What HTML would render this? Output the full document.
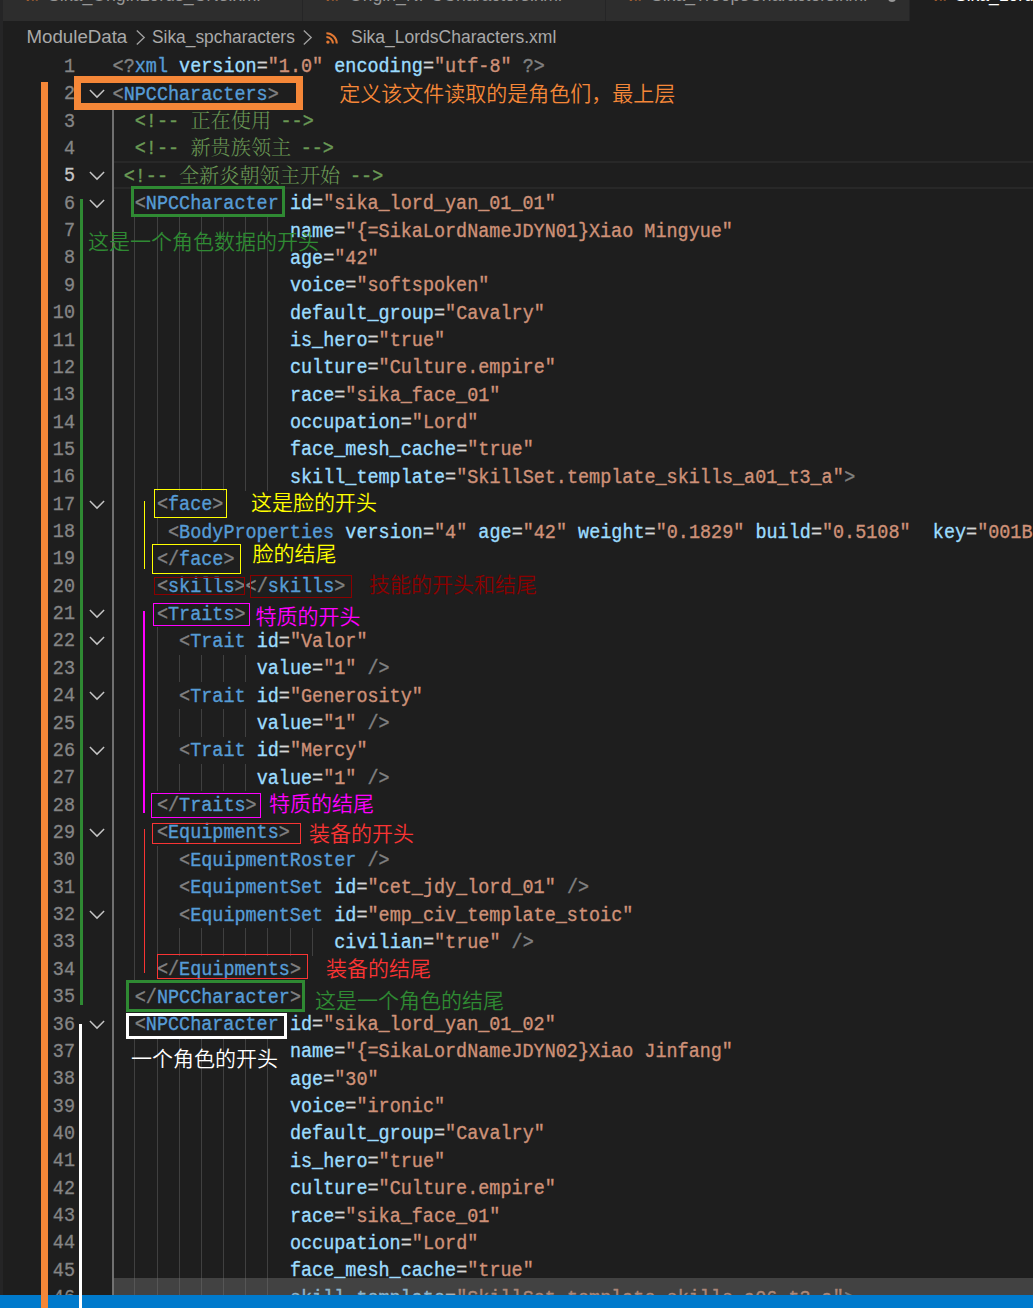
<!DOCTYPE html>
<html lang="zh-CN">
<head>
<meta charset="utf-8">
<title>Sika_LordsCharacters.xml</title>
<style>
html,body{margin:0;padding:0;background:#1e1e1e;}
body{width:1033px;height:1308px;position:relative;overflow:hidden;font-family:"Liberation Sans","Noto Sans CJK SC",sans-serif;}
#side{position:absolute;left:0;top:0;width:3px;height:1308px;background:#252526;}
#tabs{position:absolute;left:3px;top:0;width:1030px;height:21px;background:#252526;overflow:hidden;}
.tab{position:absolute;top:0;height:21px;background:#2d2d2d;overflow:hidden;}
.tab.act{background:#1e1e1e;}
.tab span{position:absolute;top:-15.6px;transform-origin:0 0;font-size:18.7px;line-height:22px;color:#969696;white-space:pre;}
.tab.act span{color:#fff;}
.rss{position:absolute;width:12px;height:12px;}
.chv{position:absolute;width:11px;height:17px;}
.dot{position:absolute;left:282px;top:-6.5px;width:8px;height:8px;border-radius:50%;background:#9a9a9a;}
#bc{position:absolute;left:0;top:21px;width:1033px;height:31.6px;}
#bc span{position:absolute;top:5.4px;transform-origin:0 0;font-size:18.7px;line-height:22px;color:#a9a9a9;white-space:pre;}
#ed{position:absolute;left:0;top:0;width:1033px;height:1308px;}
.ln{position:absolute;left:14.6px;width:60px;transform:scaleX(0.95701);transform-origin:100% 0;text-align:right;height:27.36px;line-height:27.36px;font-family:"Liberation Mono",monospace;font-size:19.30px;color:#858585;-webkit-text-stroke:0.3px;}
.ln.cur{color:#c6c6c6;}
.fold{position:absolute;left:86.5px;width:20px;height:14px;}
.ig{position:absolute;width:1px;height:27.5px;background:#404040;display:block;}
.ig.ac{background:#707070;width:1.4px;}
.cl{position:absolute;left:0;height:27.36px;line-height:27.36px;font-family:"Liberation Mono",monospace;font-size:19.30px;white-space:pre;-webkit-text-stroke:0.35px;transform:scaleX(0.95701);transform-origin:0 0;}
.cl span{position:absolute;top:0;white-space:pre;}
.g{color:#808080}.t{color:#569cd6}.a{color:#9cdcfe}.e{color:#d4d4d4}.s{color:#ce9178}.c{color:#6a9955}
.cl span.z{top:-1px;font-weight:300;color:#6a9955;font-family:"Liberation Serif","Noto Serif CJK SC",serif;font-size:20.16px;transform:scaleX(calc(1/0.95701));transform-origin:0 0;-webkit-text-stroke:0;}
#curline{position:absolute;left:113px;top:161px;width:920px;height:28px;box-sizing:border-box;border-top:2px solid #282828;border-bottom:2px solid #282828;}
#hscroll{position:absolute;left:113px;top:1278px;width:920px;height:17px;background:rgba(121,121,121,.4);}
#status{position:absolute;left:0;top:1294.6px;width:1033px;height:14px;background:#007acc;}
.an{position:absolute;box-sizing:border-box;}
.at{position:absolute;font-family:"Liberation Sans","Noto Sans CJK SC",sans-serif;font-size:21px;line-height:28px;white-space:pre;font-weight:350;}
</style>
</head>
<body>
<div id="side"></div>
<div id="tabs">
  <div class="tab" style="left:0;width:299px"><svg class="rss" style="left:22.5px;top:-11px" viewBox="0 0 12 12"><circle cx="1.9" cy="10.1" r="1.7" fill="#e37933"/><path d="M0.4 5.1 A6.5 6.5 0 0 1 6.9 11.6" fill="none" stroke="#e37933" stroke-width="2"/><path d="M0.4 1.2 A10.4 10.4 0 0 1 10.8 11.6" fill="none" stroke="#e37933" stroke-width="2"/></svg><span style="left:45.2px;transform:scaleX(.947)">Sika_OriginLords_CNs.xml</span></div>
  <div class="tab" style="left:300px;width:302px"><svg class="rss" style="left:23px;top:-11px" viewBox="0 0 12 12"><circle cx="1.9" cy="10.1" r="1.7" fill="#e37933"/><path d="M0.4 5.1 A6.5 6.5 0 0 1 6.9 11.6" fill="none" stroke="#e37933" stroke-width="2"/><path d="M0.4 1.2 A10.4 10.4 0 0 1 10.8 11.6" fill="none" stroke="#e37933" stroke-width="2"/></svg><span style="left:45.6px;transform:scaleX(.945)">Origin_NPCCharacters.xml</span></div>
  <div class="tab" style="left:603px;width:303px"><svg class="rss" style="left:22.5px;top:-11px" viewBox="0 0 12 12"><circle cx="1.9" cy="10.1" r="1.7" fill="#e37933"/><path d="M0.4 5.1 A6.5 6.5 0 0 1 6.9 11.6" fill="none" stroke="#e37933" stroke-width="2"/><path d="M0.4 1.2 A10.4 10.4 0 0 1 10.8 11.6" fill="none" stroke="#e37933" stroke-width="2"/></svg><span style="left:44.6px;transform:scaleX(.94)">Sika_TroopsCharacters.xml</span><b class="dot"></b></div>
  <div class="tab act" style="left:907px;width:130px"><svg class="rss" style="left:23.5px;top:-11px" viewBox="0 0 12 12"><circle cx="1.9" cy="10.1" r="1.7" fill="#e37933"/><path d="M0.4 5.1 A6.5 6.5 0 0 1 6.9 11.6" fill="none" stroke="#e37933" stroke-width="2"/><path d="M0.4 1.2 A10.4 10.4 0 0 1 10.8 11.6" fill="none" stroke="#e37933" stroke-width="2"/></svg><span style="left:45px;transform:scaleX(.937)">Sika_LordsCharacters.xml</span></div>
</div>
<div id="bc">
  <span style="left:26.5px">ModuleData</span>
  <svg class="chv" style="left:135px;top:7.6px" viewBox="0 0 11 17"><path d="M1.8 1.4 L9.2 8.5 L1.8 15.6" fill="none" stroke="#a0a0a0" stroke-width="1.35"/></svg>
  <span style="left:152px;transform:scaleX(.929)">Sika_spcharacters</span>
  <svg class="chv" style="left:302px;top:7.6px" viewBox="0 0 11 17"><path d="M1.8 1.4 L9.2 8.5 L1.8 15.6" fill="none" stroke="#a0a0a0" stroke-width="1.35"/></svg>
  <svg class="rss" style="left:326.3px;top:10.6px" viewBox="0 0 12 12"><circle cx="1.9" cy="10.1" r="1.7" fill="#e37933"/><path d="M0.4 5.1 A6.5 6.5 0 0 1 6.9 11.6" fill="none" stroke="#e37933" stroke-width="2"/><path d="M0.4 1.2 A10.4 10.4 0 0 1 10.8 11.6" fill="none" stroke="#e37933" stroke-width="2"/></svg>
  <span style="left:350.5px;transform:scaleX(.937)">Sika_LordsCharacters.xml</span>
</div>
<div id="ed">
<div id="curline"></div>
<div class="ln" style="top:53.90px">1</div>
<div class="cl" style="top:54.40px"><span class="g" style="left:117.66px">&lt;?</span><span class="t" style="left:140.82px">xml</span><span class="a" style="left:175.57px"> version</span><span class="e" style="left:268.22px">=</span><span class="s" style="left:279.80px">"1.0"</span><span class="a" style="left:337.71px"> encoding</span><span class="e" style="left:441.95px">=</span><span class="s" style="left:453.53px">"utf-8"</span><span class="g" style="left:534.61px"> ?&gt;</span></div>
<div class="ln" style="top:81.26px">2</div>
<svg class="fold" style="top:87.26px" viewBox="0 0 20 14"><path d="M2.9 3 L10 10.1 L17.1 3" fill="none" stroke="#c5c5c5" stroke-width="1.45"/></svg>
<div class="cl" style="top:81.76px"><span class="g" style="left:117.66px">&lt;</span><span class="t" style="left:129.24px">NPCCharacters</span><span class="g" style="left:279.80px">&gt;</span></div>
<div class="ln" style="top:108.62px">3</div>
<i class="ig ac" style="left:112.30px;top:107.32px"></i>
<div class="cl" style="top:109.12px"><span class="c" style="left:140.82px">&lt;!-- </span><span class="z" style="left:198.63px">正在使用</span><span class="c" style="left:281.53px"> --&gt;</span></div>
<div class="ln" style="top:135.98px">4</div>
<i class="ig ac" style="left:112.30px;top:134.68px"></i>
<div class="cl" style="top:136.48px"><span class="c" style="left:140.82px">&lt;!-- </span><span class="z" style="left:198.63px">新贵族领主</span><span class="c" style="left:302.60px"> --&gt;</span></div>
<div class="ln cur" style="top:163.34px">5</div>
<svg class="fold" style="top:169.34px" viewBox="0 0 20 14"><path d="M2.9 3 L10 10.1 L17.1 3" fill="none" stroke="#c5c5c5" stroke-width="1.45"/></svg>
<i class="ig ac" style="left:112.30px;top:162.04px"></i>
<div class="cl" style="top:163.84px"><span class="c" style="left:129.24px">&lt;!-- </span><span class="z" style="left:187.04px">全新炎朝领主开始</span><span class="c" style="left:354.21px"> --&gt;</span></div>
<div class="ln" style="top:190.70px">6</div>
<svg class="fold" style="top:196.70px" viewBox="0 0 20 14"><path d="M2.9 3 L10 10.1 L17.1 3" fill="none" stroke="#c5c5c5" stroke-width="1.45"/></svg>
<i class="ig ac" style="left:112.30px;top:189.40px"></i>
<div class="cl" style="top:191.20px"><span class="g" style="left:140.82px">&lt;</span><span class="t" style="left:152.40px">NPCCharacter</span><span class="a" style="left:291.39px">&nbsp;</span><span class="a" style="left:302.97px">id</span><span class="e" style="left:326.13px">=</span><span class="s" style="left:337.71px">"sika_lord_yan_01_01"</span></div>
<div class="ln" style="top:218.06px">7</div>
<i class="ig ac" style="left:112.30px;top:216.76px"></i>
<i class="ig" style="left:134.47px;top:216.76px"></i>
<i class="ig" style="left:156.64px;top:216.76px"></i>
<i class="ig" style="left:178.80px;top:216.76px"></i>
<i class="ig" style="left:200.97px;top:216.76px"></i>
<i class="ig" style="left:223.14px;top:216.76px"></i>
<i class="ig" style="left:245.31px;top:216.76px"></i>
<i class="ig" style="left:267.48px;top:216.76px"></i>
<div class="cl" style="top:218.56px"><span class="a" style="left:302.97px">name</span><span class="e" style="left:349.30px">=</span><span class="s" style="left:360.88px">"{=SikaLordNameJDYN01}Xiao Mingyue"</span></div>
<div class="ln" style="top:245.42px">8</div>
<i class="ig ac" style="left:112.30px;top:244.12px"></i>
<i class="ig" style="left:134.47px;top:244.12px"></i>
<i class="ig" style="left:156.64px;top:244.12px"></i>
<i class="ig" style="left:178.80px;top:244.12px"></i>
<i class="ig" style="left:200.97px;top:244.12px"></i>
<i class="ig" style="left:223.14px;top:244.12px"></i>
<i class="ig" style="left:245.31px;top:244.12px"></i>
<i class="ig" style="left:267.48px;top:244.12px"></i>
<div class="cl" style="top:245.92px"><span class="a" style="left:302.97px">age</span><span class="e" style="left:337.71px">=</span><span class="s" style="left:349.30px">"42"</span></div>
<div class="ln" style="top:272.78px">9</div>
<i class="ig ac" style="left:112.30px;top:271.48px"></i>
<i class="ig" style="left:134.47px;top:271.48px"></i>
<i class="ig" style="left:156.64px;top:271.48px"></i>
<i class="ig" style="left:178.80px;top:271.48px"></i>
<i class="ig" style="left:200.97px;top:271.48px"></i>
<i class="ig" style="left:223.14px;top:271.48px"></i>
<i class="ig" style="left:245.31px;top:271.48px"></i>
<i class="ig" style="left:267.48px;top:271.48px"></i>
<div class="cl" style="top:273.28px"><span class="a" style="left:302.97px">voice</span><span class="e" style="left:360.88px">=</span><span class="s" style="left:372.46px">"softspoken"</span></div>
<div class="ln" style="top:300.14px">10</div>
<i class="ig ac" style="left:112.30px;top:298.84px"></i>
<i class="ig" style="left:134.47px;top:298.84px"></i>
<i class="ig" style="left:156.64px;top:298.84px"></i>
<i class="ig" style="left:178.80px;top:298.84px"></i>
<i class="ig" style="left:200.97px;top:298.84px"></i>
<i class="ig" style="left:223.14px;top:298.84px"></i>
<i class="ig" style="left:245.31px;top:298.84px"></i>
<i class="ig" style="left:267.48px;top:298.84px"></i>
<div class="cl" style="top:300.64px"><span class="a" style="left:302.97px">default_group</span><span class="e" style="left:453.53px">=</span><span class="s" style="left:465.11px">"Cavalry"</span></div>
<div class="ln" style="top:327.50px">11</div>
<i class="ig ac" style="left:112.30px;top:326.20px"></i>
<i class="ig" style="left:134.47px;top:326.20px"></i>
<i class="ig" style="left:156.64px;top:326.20px"></i>
<i class="ig" style="left:178.80px;top:326.20px"></i>
<i class="ig" style="left:200.97px;top:326.20px"></i>
<i class="ig" style="left:223.14px;top:326.20px"></i>
<i class="ig" style="left:245.31px;top:326.20px"></i>
<i class="ig" style="left:267.48px;top:326.20px"></i>
<div class="cl" style="top:328.00px"><span class="a" style="left:302.97px">is_hero</span><span class="e" style="left:384.04px">=</span><span class="s" style="left:395.62px">"true"</span></div>
<div class="ln" style="top:354.86px">12</div>
<i class="ig ac" style="left:112.30px;top:353.56px"></i>
<i class="ig" style="left:134.47px;top:353.56px"></i>
<i class="ig" style="left:156.64px;top:353.56px"></i>
<i class="ig" style="left:178.80px;top:353.56px"></i>
<i class="ig" style="left:200.97px;top:353.56px"></i>
<i class="ig" style="left:223.14px;top:353.56px"></i>
<i class="ig" style="left:245.31px;top:353.56px"></i>
<i class="ig" style="left:267.48px;top:353.56px"></i>
<div class="cl" style="top:355.36px"><span class="a" style="left:302.97px">culture</span><span class="e" style="left:384.04px">=</span><span class="s" style="left:395.62px">"Culture.empire"</span></div>
<div class="ln" style="top:382.22px">13</div>
<i class="ig ac" style="left:112.30px;top:380.92px"></i>
<i class="ig" style="left:134.47px;top:380.92px"></i>
<i class="ig" style="left:156.64px;top:380.92px"></i>
<i class="ig" style="left:178.80px;top:380.92px"></i>
<i class="ig" style="left:200.97px;top:380.92px"></i>
<i class="ig" style="left:223.14px;top:380.92px"></i>
<i class="ig" style="left:245.31px;top:380.92px"></i>
<i class="ig" style="left:267.48px;top:380.92px"></i>
<div class="cl" style="top:382.72px"><span class="a" style="left:302.97px">race</span><span class="e" style="left:349.30px">=</span><span class="s" style="left:360.88px">"sika_face_01"</span></div>
<div class="ln" style="top:409.58px">14</div>
<i class="ig ac" style="left:112.30px;top:408.28px"></i>
<i class="ig" style="left:134.47px;top:408.28px"></i>
<i class="ig" style="left:156.64px;top:408.28px"></i>
<i class="ig" style="left:178.80px;top:408.28px"></i>
<i class="ig" style="left:200.97px;top:408.28px"></i>
<i class="ig" style="left:223.14px;top:408.28px"></i>
<i class="ig" style="left:245.31px;top:408.28px"></i>
<i class="ig" style="left:267.48px;top:408.28px"></i>
<div class="cl" style="top:410.08px"><span class="a" style="left:302.97px">occupation</span><span class="e" style="left:418.79px">=</span><span class="s" style="left:430.37px">"Lord"</span></div>
<div class="ln" style="top:436.94px">15</div>
<i class="ig ac" style="left:112.30px;top:435.64px"></i>
<i class="ig" style="left:134.47px;top:435.64px"></i>
<i class="ig" style="left:156.64px;top:435.64px"></i>
<i class="ig" style="left:178.80px;top:435.64px"></i>
<i class="ig" style="left:200.97px;top:435.64px"></i>
<i class="ig" style="left:223.14px;top:435.64px"></i>
<i class="ig" style="left:245.31px;top:435.64px"></i>
<i class="ig" style="left:267.48px;top:435.64px"></i>
<div class="cl" style="top:437.44px"><span class="a" style="left:302.97px">face_mesh_cache</span><span class="e" style="left:476.70px">=</span><span class="s" style="left:488.28px">"true"</span></div>
<div class="ln" style="top:464.30px">16</div>
<i class="ig ac" style="left:112.30px;top:463.00px"></i>
<i class="ig" style="left:134.47px;top:463.00px"></i>
<i class="ig" style="left:156.64px;top:463.00px"></i>
<i class="ig" style="left:178.80px;top:463.00px"></i>
<i class="ig" style="left:200.97px;top:463.00px"></i>
<i class="ig" style="left:223.14px;top:463.00px"></i>
<i class="ig" style="left:245.31px;top:463.00px"></i>
<i class="ig" style="left:267.48px;top:463.00px"></i>
<div class="cl" style="top:464.80px"><span class="a" style="left:302.97px">skill_template</span><span class="e" style="left:465.11px">=</span><span class="s" style="left:476.70px">"SkillSet.template_skills_a01_t3_a"</span><span class="g" style="left:882.06px">&gt;</span></div>
<div class="ln" style="top:491.66px">17</div>
<svg class="fold" style="top:497.66px" viewBox="0 0 20 14"><path d="M2.9 3 L10 10.1 L17.1 3" fill="none" stroke="#c5c5c5" stroke-width="1.45"/></svg>
<i class="ig ac" style="left:112.30px;top:490.36px"></i>
<i class="ig" style="left:134.47px;top:490.36px"></i>
<div class="cl" style="top:492.16px"><span class="g" style="left:163.99px">&lt;</span><span class="t" style="left:175.57px">face</span><span class="g" style="left:221.89px">&gt;</span></div>
<div class="ln" style="top:519.02px">18</div>
<i class="ig ac" style="left:112.30px;top:517.72px"></i>
<i class="ig" style="left:134.47px;top:517.72px"></i>
<i class="ig" style="left:156.64px;top:517.72px"></i>
<div class="cl" style="top:519.52px"><span class="g" style="left:175.57px">&lt;</span><span class="t" style="left:187.15px">BodyProperties</span><span class="a" style="left:349.30px">&nbsp;</span><span class="a" style="left:360.88px">version</span><span class="e" style="left:441.95px">=</span><span class="s" style="left:453.53px">"4"</span><span class="a" style="left:488.28px">&nbsp;</span><span class="a" style="left:499.86px">age</span><span class="e" style="left:534.61px">=</span><span class="s" style="left:546.19px">"42"</span><span class="a" style="left:592.52px">&nbsp;</span><span class="a" style="left:604.10px">weight</span><span class="e" style="left:673.59px">=</span><span class="s" style="left:685.17px">"0.1829"</span><span class="a" style="left:777.83px">&nbsp;</span><span class="a" style="left:789.41px">build</span><span class="e" style="left:847.32px">=</span><span class="s" style="left:858.90px">"0.5108"</span><span class="a" style="left:951.55px">&nbsp;&nbsp;</span><span class="a" style="left:974.72px">key</span><span class="e" style="left:1009.46px">=</span><span class="s" style="left:1021.04px">"001B</span></div>
<div class="ln" style="top:546.38px">19</div>
<i class="ig ac" style="left:112.30px;top:545.08px"></i>
<i class="ig" style="left:134.47px;top:545.08px"></i>
<div class="cl" style="top:546.88px"><span class="g" style="left:163.99px">&lt;/</span><span class="t" style="left:187.15px">face</span><span class="g" style="left:233.48px">&gt;</span></div>
<div class="ln" style="top:573.74px">20</div>
<i class="ig ac" style="left:112.30px;top:572.44px"></i>
<i class="ig" style="left:134.47px;top:572.44px"></i>
<div class="cl" style="top:574.24px"><span class="g" style="left:163.99px">&lt;</span><span class="t" style="left:175.57px">skills</span><span class="g" style="left:245.06px">&gt;&lt;/</span><span class="t" style="left:279.80px">skills</span><span class="g" style="left:349.30px">&gt;</span></div>
<div class="ln" style="top:601.10px">21</div>
<svg class="fold" style="top:607.10px" viewBox="0 0 20 14"><path d="M2.9 3 L10 10.1 L17.1 3" fill="none" stroke="#c5c5c5" stroke-width="1.45"/></svg>
<i class="ig ac" style="left:112.30px;top:599.80px"></i>
<i class="ig" style="left:134.47px;top:599.80px"></i>
<div class="cl" style="top:601.60px"><span class="g" style="left:163.99px">&lt;</span><span class="t" style="left:175.57px">Traits</span><span class="g" style="left:245.06px">&gt;</span></div>
<div class="ln" style="top:628.46px">22</div>
<svg class="fold" style="top:634.46px" viewBox="0 0 20 14"><path d="M2.9 3 L10 10.1 L17.1 3" fill="none" stroke="#c5c5c5" stroke-width="1.45"/></svg>
<i class="ig ac" style="left:112.30px;top:627.16px"></i>
<i class="ig" style="left:134.47px;top:627.16px"></i>
<i class="ig" style="left:156.64px;top:627.16px"></i>
<div class="cl" style="top:628.96px"><span class="g" style="left:187.15px">&lt;</span><span class="t" style="left:198.73px">Trait</span><span class="a" style="left:256.64px">&nbsp;</span><span class="a" style="left:268.22px">id</span><span class="e" style="left:291.39px">=</span><span class="s" style="left:302.97px">"Valor"</span></div>
<div class="ln" style="top:655.82px">23</div>
<i class="ig ac" style="left:112.30px;top:654.52px"></i>
<i class="ig" style="left:134.47px;top:654.52px"></i>
<i class="ig" style="left:156.64px;top:654.52px"></i>
<i class="ig" style="left:178.80px;top:654.52px"></i>
<i class="ig" style="left:200.97px;top:654.52px"></i>
<i class="ig" style="left:223.14px;top:654.52px"></i>
<i class="ig" style="left:245.31px;top:654.52px"></i>
<div class="cl" style="top:656.32px"><span class="a" style="left:268.22px">value</span><span class="e" style="left:326.13px">=</span><span class="s" style="left:337.71px">"1"</span><span class="g" style="left:372.46px"> /&gt;</span></div>
<div class="ln" style="top:683.18px">24</div>
<svg class="fold" style="top:689.18px" viewBox="0 0 20 14"><path d="M2.9 3 L10 10.1 L17.1 3" fill="none" stroke="#c5c5c5" stroke-width="1.45"/></svg>
<i class="ig ac" style="left:112.30px;top:681.88px"></i>
<i class="ig" style="left:134.47px;top:681.88px"></i>
<i class="ig" style="left:156.64px;top:681.88px"></i>
<div class="cl" style="top:683.68px"><span class="g" style="left:187.15px">&lt;</span><span class="t" style="left:198.73px">Trait</span><span class="a" style="left:256.64px">&nbsp;</span><span class="a" style="left:268.22px">id</span><span class="e" style="left:291.39px">=</span><span class="s" style="left:302.97px">"Generosity"</span></div>
<div class="ln" style="top:710.54px">25</div>
<i class="ig ac" style="left:112.30px;top:709.24px"></i>
<i class="ig" style="left:134.47px;top:709.24px"></i>
<i class="ig" style="left:156.64px;top:709.24px"></i>
<i class="ig" style="left:178.80px;top:709.24px"></i>
<i class="ig" style="left:200.97px;top:709.24px"></i>
<i class="ig" style="left:223.14px;top:709.24px"></i>
<i class="ig" style="left:245.31px;top:709.24px"></i>
<div class="cl" style="top:711.04px"><span class="a" style="left:268.22px">value</span><span class="e" style="left:326.13px">=</span><span class="s" style="left:337.71px">"1"</span><span class="g" style="left:372.46px"> /&gt;</span></div>
<div class="ln" style="top:737.90px">26</div>
<svg class="fold" style="top:743.90px" viewBox="0 0 20 14"><path d="M2.9 3 L10 10.1 L17.1 3" fill="none" stroke="#c5c5c5" stroke-width="1.45"/></svg>
<i class="ig ac" style="left:112.30px;top:736.60px"></i>
<i class="ig" style="left:134.47px;top:736.60px"></i>
<i class="ig" style="left:156.64px;top:736.60px"></i>
<div class="cl" style="top:738.40px"><span class="g" style="left:187.15px">&lt;</span><span class="t" style="left:198.73px">Trait</span><span class="a" style="left:256.64px">&nbsp;</span><span class="a" style="left:268.22px">id</span><span class="e" style="left:291.39px">=</span><span class="s" style="left:302.97px">"Mercy"</span></div>
<div class="ln" style="top:765.26px">27</div>
<i class="ig ac" style="left:112.30px;top:763.96px"></i>
<i class="ig" style="left:134.47px;top:763.96px"></i>
<i class="ig" style="left:156.64px;top:763.96px"></i>
<i class="ig" style="left:178.80px;top:763.96px"></i>
<i class="ig" style="left:200.97px;top:763.96px"></i>
<i class="ig" style="left:223.14px;top:763.96px"></i>
<i class="ig" style="left:245.31px;top:763.96px"></i>
<div class="cl" style="top:765.76px"><span class="a" style="left:268.22px">value</span><span class="e" style="left:326.13px">=</span><span class="s" style="left:337.71px">"1"</span><span class="g" style="left:372.46px"> /&gt;</span></div>
<div class="ln" style="top:792.62px">28</div>
<i class="ig ac" style="left:112.30px;top:791.32px"></i>
<i class="ig" style="left:134.47px;top:791.32px"></i>
<div class="cl" style="top:793.12px"><span class="g" style="left:163.99px">&lt;/</span><span class="t" style="left:187.15px">Traits</span><span class="g" style="left:256.64px">&gt;</span></div>
<div class="ln" style="top:819.98px">29</div>
<svg class="fold" style="top:825.98px" viewBox="0 0 20 14"><path d="M2.9 3 L10 10.1 L17.1 3" fill="none" stroke="#c5c5c5" stroke-width="1.45"/></svg>
<i class="ig ac" style="left:112.30px;top:818.68px"></i>
<i class="ig" style="left:134.47px;top:818.68px"></i>
<div class="cl" style="top:820.48px"><span class="g" style="left:163.99px">&lt;</span><span class="t" style="left:175.57px">Equipments</span><span class="g" style="left:291.39px">&gt;</span></div>
<div class="ln" style="top:847.34px">30</div>
<i class="ig ac" style="left:112.30px;top:846.04px"></i>
<i class="ig" style="left:134.47px;top:846.04px"></i>
<i class="ig" style="left:156.64px;top:846.04px"></i>
<div class="cl" style="top:847.84px"><span class="g" style="left:187.15px">&lt;</span><span class="t" style="left:198.73px">EquipmentRoster</span><span class="g" style="left:372.46px"> /&gt;</span></div>
<div class="ln" style="top:874.70px">31</div>
<i class="ig ac" style="left:112.30px;top:873.40px"></i>
<i class="ig" style="left:134.47px;top:873.40px"></i>
<i class="ig" style="left:156.64px;top:873.40px"></i>
<div class="cl" style="top:875.20px"><span class="g" style="left:187.15px">&lt;</span><span class="t" style="left:198.73px">EquipmentSet</span><span class="a" style="left:337.71px">&nbsp;</span><span class="a" style="left:349.30px">id</span><span class="e" style="left:372.46px">=</span><span class="s" style="left:384.04px">"cet_jdy_lord_01"</span><span class="g" style="left:580.93px"> /&gt;</span></div>
<div class="ln" style="top:902.06px">32</div>
<svg class="fold" style="top:908.06px" viewBox="0 0 20 14"><path d="M2.9 3 L10 10.1 L17.1 3" fill="none" stroke="#c5c5c5" stroke-width="1.45"/></svg>
<i class="ig ac" style="left:112.30px;top:900.76px"></i>
<i class="ig" style="left:134.47px;top:900.76px"></i>
<i class="ig" style="left:156.64px;top:900.76px"></i>
<div class="cl" style="top:902.56px"><span class="g" style="left:187.15px">&lt;</span><span class="t" style="left:198.73px">EquipmentSet</span><span class="a" style="left:337.71px">&nbsp;</span><span class="a" style="left:349.30px">id</span><span class="e" style="left:372.46px">=</span><span class="s" style="left:384.04px">"emp_civ_template_stoic"</span></div>
<div class="ln" style="top:929.42px">33</div>
<i class="ig ac" style="left:112.30px;top:928.12px"></i>
<i class="ig" style="left:134.47px;top:928.12px"></i>
<i class="ig" style="left:156.64px;top:928.12px"></i>
<i class="ig" style="left:178.80px;top:928.12px"></i>
<i class="ig" style="left:200.97px;top:928.12px"></i>
<i class="ig" style="left:223.14px;top:928.12px"></i>
<i class="ig" style="left:245.31px;top:928.12px"></i>
<i class="ig" style="left:267.48px;top:928.12px"></i>
<i class="ig" style="left:289.64px;top:928.12px"></i>
<i class="ig" style="left:311.81px;top:928.12px"></i>
<div class="cl" style="top:929.92px"><span class="a" style="left:349.30px">civilian</span><span class="e" style="left:441.95px">=</span><span class="s" style="left:453.53px">"true"</span><span class="g" style="left:523.02px"> /&gt;</span></div>
<div class="ln" style="top:956.78px">34</div>
<i class="ig ac" style="left:112.30px;top:955.48px"></i>
<i class="ig" style="left:134.47px;top:955.48px"></i>
<div class="cl" style="top:957.28px"><span class="g" style="left:163.99px">&lt;/</span><span class="t" style="left:187.15px">Equipments</span><span class="g" style="left:302.97px">&gt;</span></div>
<div class="ln" style="top:984.14px">35</div>
<i class="ig ac" style="left:112.30px;top:982.84px"></i>
<div class="cl" style="top:984.64px"><span class="g" style="left:140.82px">&lt;/</span><span class="t" style="left:163.99px">NPCCharacter</span><span class="g" style="left:302.97px">&gt;</span></div>
<div class="ln" style="top:1011.50px">36</div>
<svg class="fold" style="top:1017.50px" viewBox="0 0 20 14"><path d="M2.9 3 L10 10.1 L17.1 3" fill="none" stroke="#c5c5c5" stroke-width="1.45"/></svg>
<i class="ig ac" style="left:112.30px;top:1010.20px"></i>
<div class="cl" style="top:1012.00px"><span class="g" style="left:140.82px">&lt;</span><span class="t" style="left:152.40px">NPCCharacter</span><span class="a" style="left:291.39px">&nbsp;</span><span class="a" style="left:302.97px">id</span><span class="e" style="left:326.13px">=</span><span class="s" style="left:337.71px">"sika_lord_yan_01_02"</span></div>
<div class="ln" style="top:1038.86px">37</div>
<i class="ig ac" style="left:112.30px;top:1037.56px"></i>
<i class="ig" style="left:134.47px;top:1037.56px"></i>
<i class="ig" style="left:156.64px;top:1037.56px"></i>
<i class="ig" style="left:178.80px;top:1037.56px"></i>
<i class="ig" style="left:200.97px;top:1037.56px"></i>
<i class="ig" style="left:223.14px;top:1037.56px"></i>
<i class="ig" style="left:245.31px;top:1037.56px"></i>
<i class="ig" style="left:267.48px;top:1037.56px"></i>
<div class="cl" style="top:1039.36px"><span class="a" style="left:302.97px">name</span><span class="e" style="left:349.30px">=</span><span class="s" style="left:360.88px">"{=SikaLordNameJDYN02}Xiao Jinfang"</span></div>
<div class="ln" style="top:1066.22px">38</div>
<i class="ig ac" style="left:112.30px;top:1064.92px"></i>
<i class="ig" style="left:134.47px;top:1064.92px"></i>
<i class="ig" style="left:156.64px;top:1064.92px"></i>
<i class="ig" style="left:178.80px;top:1064.92px"></i>
<i class="ig" style="left:200.97px;top:1064.92px"></i>
<i class="ig" style="left:223.14px;top:1064.92px"></i>
<i class="ig" style="left:245.31px;top:1064.92px"></i>
<i class="ig" style="left:267.48px;top:1064.92px"></i>
<div class="cl" style="top:1066.72px"><span class="a" style="left:302.97px">age</span><span class="e" style="left:337.71px">=</span><span class="s" style="left:349.30px">"30"</span></div>
<div class="ln" style="top:1093.58px">39</div>
<i class="ig ac" style="left:112.30px;top:1092.28px"></i>
<i class="ig" style="left:134.47px;top:1092.28px"></i>
<i class="ig" style="left:156.64px;top:1092.28px"></i>
<i class="ig" style="left:178.80px;top:1092.28px"></i>
<i class="ig" style="left:200.97px;top:1092.28px"></i>
<i class="ig" style="left:223.14px;top:1092.28px"></i>
<i class="ig" style="left:245.31px;top:1092.28px"></i>
<i class="ig" style="left:267.48px;top:1092.28px"></i>
<div class="cl" style="top:1094.08px"><span class="a" style="left:302.97px">voice</span><span class="e" style="left:360.88px">=</span><span class="s" style="left:372.46px">"ironic"</span></div>
<div class="ln" style="top:1120.94px">40</div>
<i class="ig ac" style="left:112.30px;top:1119.64px"></i>
<i class="ig" style="left:134.47px;top:1119.64px"></i>
<i class="ig" style="left:156.64px;top:1119.64px"></i>
<i class="ig" style="left:178.80px;top:1119.64px"></i>
<i class="ig" style="left:200.97px;top:1119.64px"></i>
<i class="ig" style="left:223.14px;top:1119.64px"></i>
<i class="ig" style="left:245.31px;top:1119.64px"></i>
<i class="ig" style="left:267.48px;top:1119.64px"></i>
<div class="cl" style="top:1121.44px"><span class="a" style="left:302.97px">default_group</span><span class="e" style="left:453.53px">=</span><span class="s" style="left:465.11px">"Cavalry"</span></div>
<div class="ln" style="top:1148.30px">41</div>
<i class="ig ac" style="left:112.30px;top:1147.00px"></i>
<i class="ig" style="left:134.47px;top:1147.00px"></i>
<i class="ig" style="left:156.64px;top:1147.00px"></i>
<i class="ig" style="left:178.80px;top:1147.00px"></i>
<i class="ig" style="left:200.97px;top:1147.00px"></i>
<i class="ig" style="left:223.14px;top:1147.00px"></i>
<i class="ig" style="left:245.31px;top:1147.00px"></i>
<i class="ig" style="left:267.48px;top:1147.00px"></i>
<div class="cl" style="top:1148.80px"><span class="a" style="left:302.97px">is_hero</span><span class="e" style="left:384.04px">=</span><span class="s" style="left:395.62px">"true"</span></div>
<div class="ln" style="top:1175.66px">42</div>
<i class="ig ac" style="left:112.30px;top:1174.36px"></i>
<i class="ig" style="left:134.47px;top:1174.36px"></i>
<i class="ig" style="left:156.64px;top:1174.36px"></i>
<i class="ig" style="left:178.80px;top:1174.36px"></i>
<i class="ig" style="left:200.97px;top:1174.36px"></i>
<i class="ig" style="left:223.14px;top:1174.36px"></i>
<i class="ig" style="left:245.31px;top:1174.36px"></i>
<i class="ig" style="left:267.48px;top:1174.36px"></i>
<div class="cl" style="top:1176.16px"><span class="a" style="left:302.97px">culture</span><span class="e" style="left:384.04px">=</span><span class="s" style="left:395.62px">"Culture.empire"</span></div>
<div class="ln" style="top:1203.02px">43</div>
<i class="ig ac" style="left:112.30px;top:1201.72px"></i>
<i class="ig" style="left:134.47px;top:1201.72px"></i>
<i class="ig" style="left:156.64px;top:1201.72px"></i>
<i class="ig" style="left:178.80px;top:1201.72px"></i>
<i class="ig" style="left:200.97px;top:1201.72px"></i>
<i class="ig" style="left:223.14px;top:1201.72px"></i>
<i class="ig" style="left:245.31px;top:1201.72px"></i>
<i class="ig" style="left:267.48px;top:1201.72px"></i>
<div class="cl" style="top:1203.52px"><span class="a" style="left:302.97px">race</span><span class="e" style="left:349.30px">=</span><span class="s" style="left:360.88px">"sika_face_01"</span></div>
<div class="ln" style="top:1230.38px">44</div>
<i class="ig ac" style="left:112.30px;top:1229.08px"></i>
<i class="ig" style="left:134.47px;top:1229.08px"></i>
<i class="ig" style="left:156.64px;top:1229.08px"></i>
<i class="ig" style="left:178.80px;top:1229.08px"></i>
<i class="ig" style="left:200.97px;top:1229.08px"></i>
<i class="ig" style="left:223.14px;top:1229.08px"></i>
<i class="ig" style="left:245.31px;top:1229.08px"></i>
<i class="ig" style="left:267.48px;top:1229.08px"></i>
<div class="cl" style="top:1230.88px"><span class="a" style="left:302.97px">occupation</span><span class="e" style="left:418.79px">=</span><span class="s" style="left:430.37px">"Lord"</span></div>
<div class="ln" style="top:1257.74px">45</div>
<i class="ig ac" style="left:112.30px;top:1256.44px"></i>
<i class="ig" style="left:134.47px;top:1256.44px"></i>
<i class="ig" style="left:156.64px;top:1256.44px"></i>
<i class="ig" style="left:178.80px;top:1256.44px"></i>
<i class="ig" style="left:200.97px;top:1256.44px"></i>
<i class="ig" style="left:223.14px;top:1256.44px"></i>
<i class="ig" style="left:245.31px;top:1256.44px"></i>
<i class="ig" style="left:267.48px;top:1256.44px"></i>
<div class="cl" style="top:1258.24px"><span class="a" style="left:302.97px">face_mesh_cache</span><span class="e" style="left:476.70px">=</span><span class="s" style="left:488.28px">"true"</span></div>
<div class="ln" style="top:1285.10px">46</div>
<i class="ig ac" style="left:112.30px;top:1283.80px"></i>
<i class="ig" style="left:134.47px;top:1283.80px"></i>
<i class="ig" style="left:156.64px;top:1283.80px"></i>
<i class="ig" style="left:178.80px;top:1283.80px"></i>
<i class="ig" style="left:200.97px;top:1283.80px"></i>
<i class="ig" style="left:223.14px;top:1283.80px"></i>
<i class="ig" style="left:245.31px;top:1283.80px"></i>
<i class="ig" style="left:267.48px;top:1283.80px"></i>
<div class="cl" style="top:1285.60px"><span class="a" style="left:302.97px">skill_template</span><span class="e" style="left:465.11px">=</span><span class="s" style="left:476.70px">"SkillSet.template_skills_a06_t3_a"</span><span class="g" style="left:882.06px">&gt;</span></div>
<div id="hscroll"></div>
</div>
<div id="status"></div>
<div id="annos">
<!-- orange: top level -->
<div class="an" style="left:41px;top:82px;width:7px;height:1226px;background:#f58738"></div>
<div class="an" style="left:74px;top:76px;width:229px;height:34px;border:7px solid #f58738"></div>
<div class="at" style="left:339.3px;top:80px;color:#f58738">定义该文件读取的是角色们，最上层</div>
<!-- green: first character -->
<div class="an" style="left:80px;top:199px;width:3px;height:805.7px;background:#2f8a33"></div>
<div class="an" style="left:131px;top:186px;width:154px;height:31px;border:3px solid #2f8a33"></div>
<div class="at" style="left:88px;top:228px;color:#2f8a33">这是一个角色数据的开头</div>
<div class="an" style="left:126px;top:979.6px;width:179.3px;height:32.6px;border:3px solid #2f8a33"></div>
<div class="at" style="left:315px;top:987px;color:#2f8a33">这是一个角色的结尾</div>
<!-- yellow: face -->
<div class="an" style="left:144px;top:501px;width:1.2px;height:68px;background:#ffff00"></div>
<div class="an" style="left:154px;top:489px;width:73px;height:29px;border:1px solid #ffff00"></div>
<div class="at" style="left:251px;top:489px;color:#ffff00">这是脸的开头</div>
<div class="an" style="left:152px;top:544px;width:89px;height:30px;border:1px solid #ffff00"></div>
<div class="at" style="left:252.5px;top:540px;color:#ffff00">脸的结尾</div>
<!-- dark red: skills -->
<div class="an" style="left:154px;top:577px;width:91px;height:18px;border:1px solid #8b0000"></div>
<div class="an" style="left:250px;top:575px;width:102px;height:22.6px;border:1px solid #8b0000"></div>
<div class="at" style="left:369px;top:571px;color:#8b0000">技能的开头和结尾</div>
<!-- magenta: traits -->
<div class="an" style="left:143.2px;top:611px;width:2.2px;height:202px;background:#ff00ff"></div>
<div class="an" style="left:153px;top:603px;width:97px;height:22.6px;border:1px solid #ff00ff"></div>
<div class="at" style="left:255.5px;top:603px;color:#ff00ff">特质的开头</div>
<div class="an" style="left:151px;top:793px;width:110px;height:25px;border:1px solid #ff00ff"></div>
<div class="at" style="left:269px;top:790px;color:#ff00ff">特质的结尾</div>
<!-- red: equipments -->
<div class="an" style="left:144.2px;top:829px;width:1.2px;height:143.5px;background:#f93434"></div>
<div class="an" style="left:152px;top:823px;width:148.5px;height:21px;border:1px solid #f93434"></div>
<div class="at" style="left:309px;top:820px;color:#f93434">装备的开头</div>
<div class="an" style="left:156.5px;top:953.5px;width:151px;height:25.5px;border:1px solid #f93434"></div>
<div class="at" style="left:326px;top:955px;color:#f93434">装备的结尾</div>
<!-- white: second character -->
<div class="an" style="left:79px;top:1024px;width:3px;height:284px;background:#ffffff"></div>
<div class="an" style="left:126px;top:1012.8px;width:160.5px;height:25.8px;border:3px solid #ffffff"></div>
<div class="at" style="left:131px;top:1045px;color:#ffffff">一个角色的开头</div>

</div>
</body>
</html>
